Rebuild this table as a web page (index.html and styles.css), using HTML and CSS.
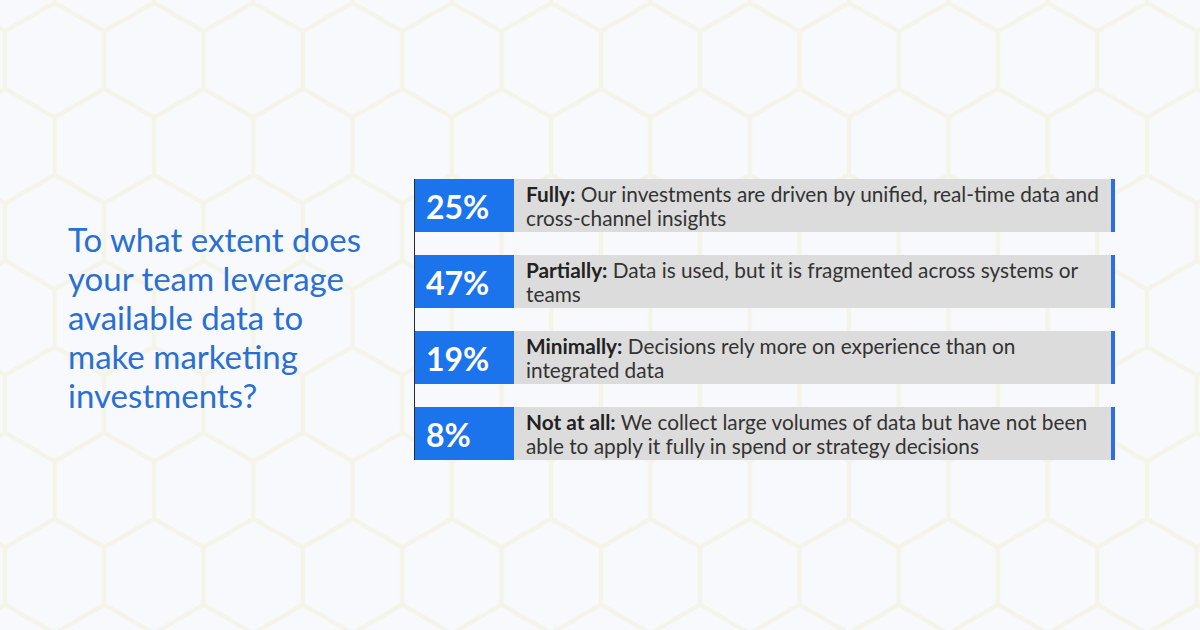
FILE: index.html
```html
<!DOCTYPE html>
<html lang="en">
<head>
<meta charset="utf-8">
<link rel="stylesheet" href="styles.css">
</head>
<body>
<div class="page">
  <svg class="hex-bg" width="1200" height="630" viewBox="0 0 1200 630" aria-hidden="true">
    <defs>
      <pattern id="hex" patternUnits="userSpaceOnUse" x="5" y="2.7" width="99.3" height="172">
        <path d="M49.65 0 L99.3 28.67 L99.3 86 L49.65 114.67 L0 86 L0 28.67 Z M49.65 114.67 L49.65 172" fill="none" stroke="#f5f4e9" stroke-width="4.5"/>
      </pattern>
    </defs>
    <rect width="1200" height="630" fill="url(#hex)"/>
  </svg>
  <main class="content">
    <h1 class="question">To what extent does your team leverage available data to make marketing investments?</h1>
    <div class="answers">
      <div class="row">
        <div class="pct">25%</div>
        <div class="desc"><b>Fully:</b> Our investments are driven by unified, real-time data and cross-channel insights</div>
      </div>
      <div class="row">
        <div class="pct">47%</div>
        <div class="desc"><b>Partially:</b> Data is used, but it is fragmented across systems or teams</div>
      </div>
      <div class="row">
        <div class="pct">19%</div>
        <div class="desc"><b>Minimally:</b> Decisions rely more on experience than on integrated data</div>
      </div>
      <div class="row">
        <div class="pct">8%</div>
        <div class="desc"><b>Not at all:</b> We collect large volumes of data but have not been able to apply it fully in spend or strategy decisions</div>
      </div>
    </div>
  </main>
</div>
</body>
</html>
```

FILE: styles.css
```css
* { box-sizing: border-box; }
html, body {
  margin: 0;
  padding: 0;
  background: #f8f9fc;
}
body {
  font-family: Lato, "Open Sans", "Liberation Sans", sans-serif;
}
.page {
  position: relative;
  width: 1200px;
  height: 630px;
  overflow: hidden;
  background: #f8f9fc;
}
.hex-bg {
  position: absolute;
  left: 0;
  top: 0;
}
.content {
  position: relative;
  height: 630px;
  display: flex;
  align-items: center;
  padding-left: 68px;
  padding-top: 9px;
}
.question {
  width: 320px;
  margin: 0 26px 0 0;
  padding-bottom: 5px;
  font-weight: 400;
  font-size: 33px;
  line-height: 39px;
  color: #2a6fd2;
}
.answers {
  width: 701px;
  border-left: 1.5px solid #2a2a2a;
  display: flex;
  flex-direction: column;
  gap: 23.5px;
}
.row {
  display: flex;
  height: 52.5px;
}
.pct {
  width: 99px;
  flex: none;
  background: #1b74ec;
  color: #ffffff;
  font-weight: 700;
  font-size: 32px;
  display: flex;
  align-items: center;
  padding-left: 11px;
  padding-top: 1px;
}
.desc {
  flex: 1;
  display: block;
  background: #dcdcdc;
  border-right: 4px solid #2d6fde;
  padding: 3px 5px 0 12px;
  font-size: 20.8px;
  line-height: 24px;
  color: #333333;
}
.desc b {
  font-weight: 700;
  color: #222222;
}
```
